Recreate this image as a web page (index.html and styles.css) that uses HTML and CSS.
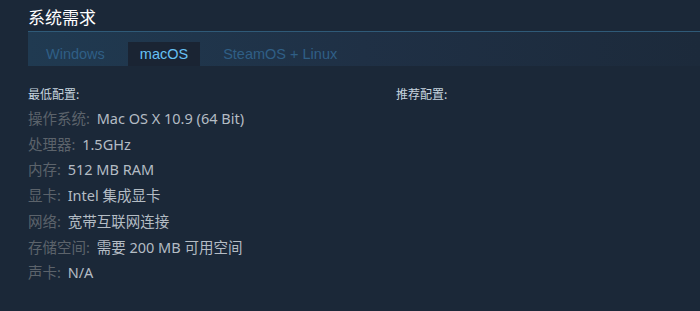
FILE: index.html
```html
<!DOCTYPE html>
<html lang="zh-CN">
<head>
    <meta http-equiv="content-type" content="text/html; charset=utf-8" />
    <title>系统需求</title>
    <link rel="stylesheet" href="styles.css">
</head>
<body>
<div class="sysreq">
    <h2>系统需求</h2>
    <div class="sysreq-tabs">
        <div class="tab">Windows</div>
        <div class="tab active">macOS</div>
        <div class="tab">SteamOS + Linux</div>
    </div>
    <div class="sysreq-contents">
        <div class="col">
            <div class="col-title">最低配置:</div>
            <ul>
                <li><span class="label">操作系统:</span> Mac OS X 10.9 (64 Bit)</li>
                <li><span class="label">处理器:</span> 1.5GHz</li>
                <li><span class="label">内存:</span> 512 MB RAM</li>
                <li><span class="label">显卡:</span> Intel 集成显卡</li>
                <li><span class="label">网络:</span> 宽带互联网连接</li>
                <li><span class="label">存储空间:</span> 需要 200 MB 可用空间</li>
                <li><span class="label">声卡:</span> N/A</li>
            </ul>
        </div>
        <div class="col col-right">
            <div class="col-title">推荐配置:</div>
        </div>
    </div>
</div>
</body>
</html>
```

FILE: styles.css
```css
body {
    margin: 0;
    background: #1b2838;
    font-family: "Noto Sans", "Noto Sans CJK SC", sans-serif;
}
.sysreq {
    padding: 6px 0 0 28px;
}
h2 {
    margin: 0;
    font-size: 17px;
    font-weight: normal;
    line-height: 22px;
    color: #ffffff;
    font-family: "Noto Sans CJK SC", sans-serif;
}
.sysreq-tabs {
    margin-top: 3px;
    height: 24px;
    padding: 10px 0 0 6px;
    border-top: 1px solid #2f5a78;
    background: linear-gradient(90deg, #203a51 0%, #1f3045 50%, #1c2a3b 100%);
    display: flex;
    gap: 11px;
    font-family: "Liberation Sans", Arial, sans-serif;
}
.tab {
    font-size: 14.5px;
    line-height: 24px;
    padding: 0 12px;
    color: #2f5f86;
}
.tab.active {
    background: #1a2433;
    color: #66c0f4;
}
.sysreq-contents {
    display: flex;
    padding-top: 20px;
}
.col {
    flex: none;
    width: 368px;
}
.col-right {
    flex: 1;
    width: auto;
}
.col-title {
    font-size: 12px;
    line-height: 16px;
    color: #c6d4df;
    font-family: "Noto Sans CJK SC", sans-serif;
    margin-bottom: 4px;
}
ul {
    margin: 0;
    padding: 0;
    list-style: none;
}
li {
    font-size: 14.5px;
    line-height: 25.7px;
    color: #b4bcc4;
}
.label {
    color: #5c636b;
    margin-right: 3px;
}
```
